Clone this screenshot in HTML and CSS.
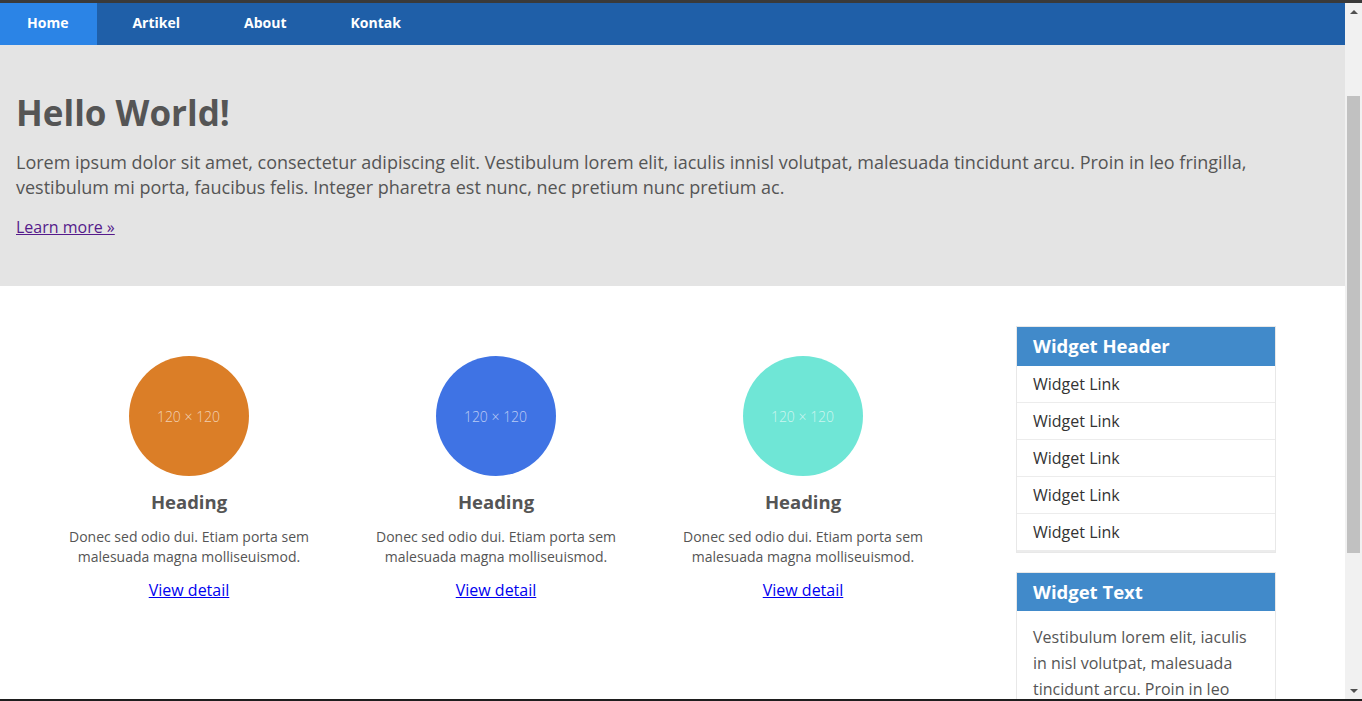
FILE: index.html
```html
<!DOCTYPE html>
<html lang="id">
<head>
<meta charset="utf-8">
<title>Hello World</title>
<link rel="stylesheet" href="styles.css">
</head>
<body>
<div class="frame">
  <div class="frame-top"></div>
  <div class="viewport">
    <div class="page">
      <nav class="navbar">
        <a class="nav-item active" href="#">Home</a>
        <a class="nav-item" href="#">Artikel</a>
        <a class="nav-item" href="#">About</a>
        <a class="nav-item" href="#">Kontak</a>
      </nav>
      <header class="hero">
        <h1 class="hero-title">Hello World!</h1>
        <p class="hero-text">Lorem ipsum dolor sit amet, consectetur adipiscing elit. Vestibulum lorem elit, iaculis innisl volutpat, malesuada tincidunt arcu. Proin in leo fringilla, vestibulum mi porta, faucibus felis. Integer pharetra est nunc, nec pretium nunc pretium ac.</p>
        <p class="hero-link"><a class="visited" href="#">Learn more »</a></p>
      </header>
      <main class="content">
        <section class="features">
          <div class="feature">
            <div class="thumb orange">120 × 120</div>
            <h2 class="feature-title">Heading</h2>
            <p class="feature-text">Donec sed odio dui. Etiam porta sem malesuada magna molliseuismod.</p>
            <a class="feature-link" href="#">View detail</a>
          </div>
          <div class="feature">
            <div class="thumb blue">120 × 120</div>
            <h2 class="feature-title">Heading</h2>
            <p class="feature-text">Donec sed odio dui. Etiam porta sem malesuada magna molliseuismod.</p>
            <a class="feature-link" href="#">View detail</a>
          </div>
          <div class="feature">
            <div class="thumb teal">120 × 120</div>
            <h2 class="feature-title">Heading</h2>
            <p class="feature-text">Donec sed odio dui. Etiam porta sem malesuada magna molliseuismod.</p>
            <a class="feature-link" href="#">View detail</a>
          </div>
        </section>
        <aside class="sidebar">
          <div class="widget">
            <h3 class="widget-header">Widget Header</h3>
            <ul class="widget-links">
              <li><a href="#">Widget Link</a></li>
              <li><a href="#">Widget Link</a></li>
              <li><a href="#">Widget Link</a></li>
              <li><a href="#">Widget Link</a></li>
              <li><a href="#">Widget Link</a></li>
            </ul>
          </div>
          <div class="widget">
            <h3 class="widget-header">Widget Text</h3>
            <p class="widget-body">Vestibulum lorem elit, iaculis in nisl volutpat, malesuada tincidunt arcu. Proin in leo fringilla, vestibulum mi porta, faucibus felis.</p>
          </div>
        </aside>
      </main>
    </div>
    <div class="scrollbar">
      <div class="sb-arrow up"></div>
      <div class="sb-track"><div class="sb-thumb"></div></div>
      <div class="sb-arrow down"></div>
    </div>
  </div>
  <div class="frame-bottom"></div>
</div>
</body>
</html>
```

FILE: styles.css
```css
* { box-sizing: border-box; }

html, body {
  margin: 0;
  padding: 0;
  height: 100%;
  overflow: hidden;
}

body {
  font-family: "Open Sans", "Noto Sans", sans-serif;
  color: #555;
  background: #fff;
}

.frame {
  display: flex;
  flex-direction: column;
  height: 701px;
}

.frame-top {
  height: 3px;
  background: #3a3a3a;
  flex: none;
}

.frame-bottom {
  height: 2px;
  background: #1e1e1e;
  flex: none;
}

.viewport {
  flex: 1;
  display: flex;
  min-height: 0;
}

.page {
  flex: 1;
  overflow: hidden;
  background: #fff;
}

/* Navbar */
.navbar {
  display: flex;
  gap: 8px;
  height: 42px;
  background: #1f5fa8;
}

.nav-item {
  display: flex;
  align-items: center;
  padding: 0 29px 4px 27px;
  color: #fff;
  font-weight: 700;
  font-size: 14px;
  text-decoration: none;
}

.nav-item.active {
  background: #2b84e6;
}

/* Hero */
.hero {
  background: #e4e4e4;
  padding: 46px 16px 0 16px;
  height: 241px;
}

.hero-title {
  margin: 0;
  font-size: 35px;
  line-height: 43px;
  font-weight: 700;
  color: #555;
}

.hero-text {
  margin: 16px 0 0;
  font-size: 18px;
  line-height: 25px;
  color: #555;
}

.hero-link {
  margin: 16px 0 0;
  font-size: 16px;
  line-height: 22px;
}

.visited {
  color: #551a8b;
}

/* Content */
.content {
  display: flex;
  align-items: flex-start;
  padding: 40px 0 0 35px;
}

.features {
  display: flex;
  padding-top: 30px;
  width: 922px;
}

.feature {
  width: 307px;
  display: flex;
  flex-direction: column;
  align-items: center;
  text-align: center;
}

.thumb {
  width: 120px;
  height: 120px;
  border-radius: 50%;
  display: flex;
  align-items: center;
  justify-content: center;
  font-size: 14px;
  font-weight: 300;
  color: rgba(255, 255, 255, 0.65);
}

.thumb.orange { background: #db7e27; }
.thumb.blue { background: #3f73e4; }
.thumb.teal { background: #6fe6d6; }

.feature-title {
  margin: 12px 0 0 1px;
  font-size: 18.5px;
  line-height: 28px;
  font-weight: 700;
  color: #555;
}

.feature-text {
  margin: 11px 0 0 1px;
  width: 250px;
  font-size: 14px;
  line-height: 20px;
  color: #555;
}

.feature-link {
  margin: 12px 0 0 1px;
  font-size: 16px;
  line-height: 22px;
  color: #0000ee;
}

/* Sidebar */
.sidebar {
  margin-left: 59px;
  width: 260px;
  display: flex;
  flex-direction: column;
  gap: 19px;
}

.widget {
  border: 1px solid #e8e8e8;
  background: #fff;
}

.widget-header {
  margin: 0;
  height: 39px;
  padding: 0 16px 2px;
  display: flex;
  align-items: center;
  background: #418aca;
  color: #fff;
  font-size: 18.5px;
  font-weight: 700;
}

.widget + .widget .widget-header {
  height: 38px;
}

.widget-links {
  list-style: none;
  margin: 0;
  padding: 0;
}

.widget-links li {
  border-bottom: 1px solid #ececec;
}

.widget-links li:last-child {
  border-bottom-width: 2px;
}

.widget-links a {
  display: block;
  padding: 8px 16px 7px;
  font-size: 16px;
  line-height: 21px;
  color: #333;
  text-decoration: none;
}

.widget-body {
  margin: 0;
  padding: 13px 16px;
  font-size: 16px;
  line-height: 26px;
  color: #555;
}

/* Fake scrollbar */
.scrollbar {
  width: 17px;
  flex: none;
  background: #f1f1f1;
  display: flex;
  flex-direction: column;
}

.sb-arrow {
  height: 17px;
  flex: none;
  display: flex;
  align-items: center;
  justify-content: center;
}

.sb-arrow.up::before {
  content: "";
  border-left: 4px solid transparent;
  border-right: 4px solid transparent;
  border-bottom: 4px solid #505050;
}

.sb-arrow.down::before {
  content: "";
  border-left: 4px solid transparent;
  border-right: 4px solid transparent;
  border-top: 4px solid #505050;
}

.sb-track {
  flex: 1;
  padding: 76px 2px 0;
}

.sb-thumb {
  height: 457px;
  background: #c1c1c1;
}
```
